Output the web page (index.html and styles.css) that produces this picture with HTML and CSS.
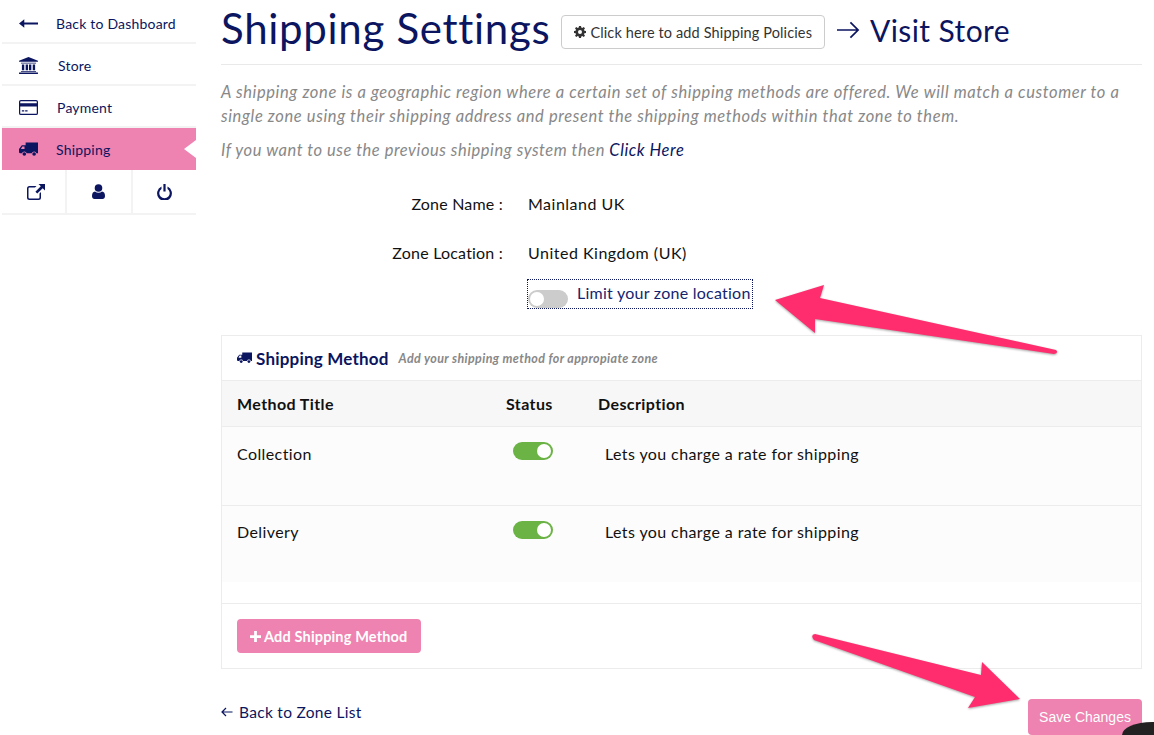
FILE: index.html
```html
<!DOCTYPE html>
<html>
<head>
  <meta charset="utf-8">
  <link rel="stylesheet" href="styles.css">
</head>
<body>
  <div class="page">
    <div class="sidebar">
      <a class="nav-item">
        <svg class="nav-icon" viewBox="0 0 18 10"><path d="M0 5 5 1v3h13v2H5v3z"/></svg>
        <span>Back to Dashboard</span>
      </a>
      <a class="nav-item">
        <svg class="nav-icon" viewBox="0 0 20 18"><path d="M10 0 20 4v1H0V4zM2 6h16v1H2zM3 8h2.500v6H3zM7 8h2.500v6H7zM10.500 8H13v6h-2.500zM14.500 8H17v6h-2.500zM2 15h16v1H2zM0 16.500h20V18H0z"/></svg>
        <span class="nav-store">Store</span>
      </a>
      <a class="nav-item">
        <svg class="nav-icon" viewBox="0 0 20 16"><path fill-rule="evenodd" d="M2 0h16a2 2 0 0 1 2 2v12a2 2 0 0 1-2 2H2a2 2 0 0 1-2-2V2a2 2 0 0 1 2-2zm-.7 3.500h17.400V2a.7.7 0 0 0-.7-.7H2a.7.7 0 0 0-.7.700zm0 3.500v7a.7.7 0 0 0 .7.700h16a.7.7 0 0 0 .7-.7V7zM3 11h2.500v1.200H3zM6.500 11H9v1.200H6.500z"/></svg>
        <span class="nav-payment">Payment</span>
      </a>
      <a class="nav-item nav-active">
        <svg class="nav-icon" viewBox="0 0 20 15"><path d="M7 0h13v11.500h-1.600a2.600 2.600 0 0 0-5 0H8.100a2.600 2.600 0 0 0-5 0H1.500A1.500 1.500 0 0 1 0 10V7l3-4h4zM2 7h3.800V4.300H3.500z" fill-rule="evenodd"/><circle cx="5.600" cy="12.300" r="1.900"/><circle cx="15.900" cy="12.300" r="1.900"/></svg>
        <span>Shipping</span>
      </a>
      <div class="nav-tools">
        <a class="tool">
          <svg width="18" height="16" viewBox="0 0 18 16"><path d="M11.500 0H18v6.500l-2.300-2.300-5.400 5.400-1.900-1.900 5.400-5.400zM2.500 2h7L8 3.500H2.800a1.200 1.200 0 0 0-1.300 1.300v8.400a1.200 1.200 0 0 0 1.300 1.300h8.400a1.200 1.200 0 0 0 1.300-1.300V9.500l1.500-1.500v5.500A2.500 2.500 0 0 1 11.500 16h-9A2.500 2.500 0 0 1 0 13.500v-9A2.500 2.500 0 0 1 2.500 2z"/></svg>
        </a>
        <a class="tool">
          <svg width="13" height="15" viewBox="0 0 13 15"><circle cx="6.500" cy="4" r="3.800"/><path d="M3 7.500c1 .8 2.200 1.200 3.500 1.200s2.500-.4 3.500-1.200c2 .2 3 1.800 3 4.500 0 1.900-1 3-2.600 3H2.600C1 15 0 13.900 0 12c0-2.700 1-4.300 3-4.500z"/></svg>
        </a>
        <a class="tool">
          <svg width="15" height="16" viewBox="0 0 15 16"><path d="M6.400 0h2.200v7.500H6.400zM4.500 2.600v2.300a5.200 5.200 0 1 0 6 0V2.600a7.400 7.400 0 1 1-6 0z"/></svg>
        </a>
      </div>
    </div>

    <div class="main">
      <div class="title-row">
        <h1>Shipping Settings</h1>
        <a class="policy-btn">
          <svg class="cog" viewBox="0 0 12 12"><path fill-rule="evenodd" d="M5 0h2l.3 1.600 1 .4L9.700 1 11 2.300 10 3.700l.4 1L12 5v2l-1.600.3-.4 1 1 1.400L9.700 11l-1.400-1-1 .4L7 12H5l-.3-1.600-1-.4L2.300 11 1 9.700l1-1.400-.4-1L0 7V5l1.600-.3.4-1L1 2.300 2.300 1l1.400 1 1-.4zM6 4a2 2 0 1 0 0 4 2 2 0 0 0 0-4z"/></svg>
          Click here to add Shipping Policies
        </a>
        <a class="visit">
          <svg class="visit-arrow" viewBox="0 0 24 18"><path d="M0 9h22M14 1l8 8-8 8" fill="none" stroke="#0b1560" stroke-width="1.800"/></svg>
          Visit Store
        </a>
      </div>

      <p class="intro">A shipping zone is a geographic region where a certain set of shipping methods are offered. We will match a customer to a single zone using their shipping address and present the shipping methods within that zone to them.</p>
      <p class="intro intro-link">If you want to use the previous shipping system then <a>Click Here</a></p>

      <div class="form-row">
        <label>Zone Name :</label>
        <span>Mainland UK</span>
      </div>
      <div class="form-row form-row-second">
        <label>Zone Location :</label>
        <span>United Kingdom (UK)</span>
      </div>
      <div class="limit-row">
        <div class="limit-box">
          <span class="switch switch-off"></span>
          <span class="limit-text">Limit your zone location</span>
        </div>
      </div>

      <div class="card">
        <div class="card-head">
          <svg class="head-truck" viewBox="0 0 20 15"><path d="M7 0h13v11.500h-1.600a2.600 2.600 0 0 0-5 0H8.100a2.600 2.600 0 0 0-5 0H1.500A1.500 1.500 0 0 1 0 10V7l3-4h4zM2 7h3.800V4.300H3.500z" fill-rule="evenodd"/><circle cx="5.600" cy="12.300" r="1.900"/><circle cx="15.900" cy="12.300" r="1.900"/></svg>
          <strong>Shipping Method</strong>
          <em>Add your shipping method for appropiate zone</em>
        </div>
        <table class="methods">
          <thead>
            <tr>
              <th class="col-title">Method Title</th>
              <th class="col-status">Status</th>
              <th>Description</th>
            </tr>
          </thead>
          <tbody>
            <tr>
              <td>Collection</td>
              <td><span class="switch switch-on"></span></td>
              <td class="desc">Lets you charge a rate for shipping</td>
            </tr>
            <tr class="row-last">
              <td>Delivery</td>
              <td><span class="switch switch-on"></span></td>
              <td class="desc">Lets you charge a rate for shipping</td>
            </tr>
          </tbody>
        </table>
        <div class="card-gap"></div>
        <div class="card-foot">
          <a class="add-btn">
            <svg class="plus" viewBox="0 0 12 12"><path d="M4.500 0h3v4.500H12v3H7.500V12h-3V7.500H0v-3h4.500z"/></svg>
            Add Shipping Method
          </a>
        </div>
      </div>

      <div class="bottom-row">
        <a class="back-zone">
          <svg class="back-arrow" viewBox="0 0 12 10"><path d="M11.500 5H1M5 1 1 5l4 4" fill="none" stroke="#0b1560" stroke-width="1.200"/></svg>
          Back to Zone List
        </a>
        <a class="save-btn">Save Changes</a>
      </div>
    </div>
  </div>

  <!-- annotation arrows drawn over the screenshot -->
  <svg class="arrows" width="1154" height="735" viewBox="0 0 1154 735">
    <path class="arrow" d="M775 300 824 285 820 298 1056 350Q1059 353 1054 354L815 319 815 333Z"/>
    <path class="arrow" d="M1020 699 968 708 975 697 814 640Q810 635 815 634L981 675 982 662Z"/>
  </svg>
  <div class="chat-bubble"></div>
</body>
</html>
```

FILE: styles.css
```css
* {
  margin: 0;
  padding: 0;
  box-sizing: border-box;
}

html, body {
  height: 735px;
  overflow: hidden;
}

body {
  font-family: Lato, "Noto Sans", sans-serif;
  font-size: 16px;
  color: #111;
  background: #fff;
  position: relative;
}

.page {
  display: flex;
  height: 735px;
}

.sidebar {
  width: 194px;
  margin-left: 2px;
  flex-shrink: 0;
  color: #0b1560;
}

.nav-item {
  height: 42px;
  display: flex;
  align-items: center;
  padding-top: 2px;
  border-bottom: 2px solid #f3f3f3;
  font-size: 14px;
  letter-spacing: 0.2px;
}

.nav-item:first-child {
  height: 44px;
  padding-top: 4px;
}

.nav-icon {
  width: 19px;
  height: 17px;
  margin-left: 17px;
  margin-right: 18px;
  fill: #0b1560;
  flex-shrink: 0;
}

.nav-store {
  margin-left: 2px;
}

.nav-payment {
  margin-left: 1px;
}

.nav-active {
  padding-top: 0;
  background: #ee82b0;
  border-bottom: none;
  clip-path: polygon(0 0, 100% 0, 100% 12px, 182px 21px, 100% 30px, 100% 100%, 0 100%);
}

.nav-tools {
  display: flex;
  height: 45px;
  border-bottom: 2px solid #f3f3f3;
}

.tool {
  flex: 1 1 0;
  display: flex;
  align-items: center;
  justify-content: center;
  border-right: 2px solid #f3f3f3;
}

.tool:first-child svg {
  margin-left: 4px;
}

.tool:last-child {
  border-right: none;
}

.tool svg {
  fill: #0b1560;
}

.main {
  width: 921px;
  margin-left: 25px;
}

.title-row {
  height: 65px;
  display: flex;
  align-items: flex-start;
  border-bottom: 1px solid #e9e9e9;
}

h1 {
  font-size: 42px;
  font-weight: 400;
  line-height: 56px;
  color: #0b1560;
  letter-spacing: 0.7px;
  white-space: nowrap;
}

.policy-btn {
  display: flex;
  align-items: center;
  height: 34px;
  margin-top: 15px;
  margin-left: 11px;
  padding: 0 12px;
  border: 1px solid #ccc;
  border-radius: 4px;
  font-size: 14.500px;
  letter-spacing: 0.13px;
  color: #333;
  white-space: nowrap;
}

.cog {
  width: 12px;
  height: 12px;
  fill: #333;
  margin-right: 4px;
}

.visit {
  display: flex;
  align-items: center;
  height: 34px;
  margin-top: 13px;
  margin-left: 12px;
  font-size: 30px;
  letter-spacing: 0.4px;
  color: #0b1560;
  white-space: nowrap;
}

.visit-arrow {
  width: 23px;
  height: 18px;
  margin-right: 10px;
}

.intro {
  font-size: 16.500px;
  font-style: italic;
  line-height: 24px;
  color: #888;
  margin-top: 15px;
  letter-spacing: 0.61px;
}

.intro-link {
  margin-top: 10px;
  letter-spacing: 0.54px;
}

.intro-link a {
  color: #0b1560;
}

.form-row {
  display: flex;
  margin-top: 30px;
  line-height: 24px;
}

.form-row-second {
  margin-top: 25px;
}

.form-row label {
  width: 282px;
  margin-right: 25px;
  text-align: right;
  letter-spacing: 0.2px;
}

.form-row span {
  letter-spacing: 0.5px;
}

.limit-row {
  margin-top: 14px;
  padding-left: 306px;
}

.limit-box {
  width: 226px;
  height: 30px;
  display: flex;
  border: 1px dotted #0b1560;
}

.limit-text {
  color: #14246f;
  line-height: 26px;
  margin-left: 9px;
  letter-spacing: 0.25px;
  white-space: nowrap;
}

.switch {
  display: inline-block;
  position: relative;
  width: 40px;
  height: 18px;
  border-radius: 9px;
}

.switch::after {
  content: "";
  position: absolute;
  top: 2px;
  width: 14px;
  height: 14px;
  border-radius: 50%;
  background: #fff;
}

.switch-on {
  background: #6ab344;
  margin-left: 7px;
}

.switch-on::after {
  right: 2px;
}

.switch-off {
  background: #ccc;
  margin-top: 10px;
}

.switch-off::after {
  left: 2px;
}

.card {
  margin-top: 26px;
  height: 334px;
  border: 1px solid #ececec;
}

.card-head {
  height: 45px;
  display: flex;
  align-items: center;
  padding-left: 15px;
  border-bottom: 1px solid #ececec;
  color: #0b1560;
}

.head-truck {
  width: 15px;
  height: 12px;
  fill: #0b1560;
  margin-right: 4px;
}

.card-head strong {
  font-size: 17px;
  font-weight: 700;
  letter-spacing: 0.2px;
}

.card-head em {
  font-size: 12.500px;
  font-weight: 700;
  letter-spacing: 0.37px;
  color: #888;
  margin-left: 10px;
}

.methods {
  width: 100%;
  border-collapse: collapse;
  table-layout: fixed;
}

.methods th {
  height: 45px;
  text-align: left;
  padding-left: 15px;
  background: #f7f7f7;
  font-weight: 700;
  letter-spacing: 0.4px;
  color: #111;
  border-bottom: 1px solid #ececec;
}

.col-title {
  width: 269px;
}

.col-status {
  width: 92px;
}

.methods td {
  height: 77px;
  padding: 15px 0 0 15px;
  vertical-align: top;
  background: #fcfcfc;
  line-height: 24px;
  letter-spacing: 0.4px;
}

.methods tbody tr:first-child td {
  border-bottom: 1px solid #ececec;
  height: 79px;
}

.methods .row-last td {
  padding-top: 14px;
}

.methods .row-last .switch {
  margin-top: 1px;
}

.methods td.desc {
  padding-left: 22px;
}

.card-gap {
  height: 21px;
  border-bottom: 1px solid #ececec;
  box-sizing: content-box;
}

.card-foot {
  padding: 15px;
}

.add-btn {
  display: inline-flex;
  align-items: center;
  height: 34px;
  padding: 0 14px 0 13px;
  border-radius: 4px;
  background: #ee82b0;
  color: #fff;
  font-size: 14.500px;
  font-weight: 700;
  letter-spacing: 0.16px;
}

.plus {
  width: 11px;
  height: 11px;
  fill: #fff;
  margin-right: 3px;
}

.bottom-row {
  display: flex;
  justify-content: space-between;
  align-items: flex-start;
  margin-top: 30px;
}

.back-zone {
  display: flex;
  align-items: center;
  height: 26px;
  color: #0b1560;
  font-size: 15.500px;
  letter-spacing: 0.3px;
}

.back-arrow {
  width: 12px;
  height: 10px;
  margin-right: 6px;
}

.save-btn {
  display: flex;
  align-items: center;
  justify-content: center;
  width: 114px;
  height: 36px;
  border-radius: 4px;
  background: #ee82b0;
  color: #fff;
  font-family: "Liberation Sans", sans-serif;
  font-size: 14px;
}

.arrows {
  position: absolute;
  left: 0;
  top: 0;
  pointer-events: none;
}

.arrow {
  fill: #ff2d6d;
  filter: drop-shadow(0 1px 1px rgba(0, 0, 0, 0.35));
}

.chat-bubble {
  position: absolute;
  left: 1122px;
  top: 722px;
  width: 32px;
  height: 13px;
  border-top-left-radius: 30px 13px;
  background: #222;
}
```
